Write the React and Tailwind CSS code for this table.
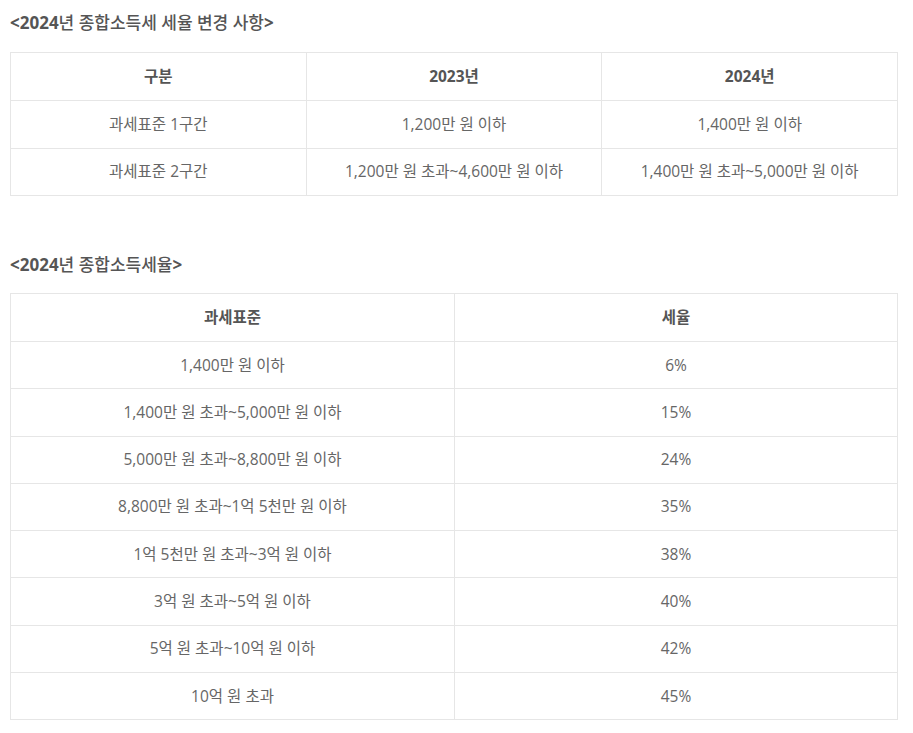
import React from 'react';

const changes = [
  ['과세표준 1구간', '1,200만 원 이하', '1,400만 원 이하'],
  ['과세표준 2구간', '1,200만 원 초과~4,600만 원 이하', '1,400만 원 초과~5,000만 원 이하'],
];

const rates = [
  ['1,400만 원 이하', '6%'],
  ['1,400만 원 초과~5,000만 원 이하', '15%'],
  ['5,000만 원 초과~8,800만 원 이하', '24%'],
  ['8,800만 원 초과~1억 5천만 원 이하', '35%'],
  ['1억 5천만 원 초과~3억 원 이하', '38%'],
  ['3억 원 초과~5억 원 이하', '40%'],
  ['5억 원 초과~10억 원 이하', '42%'],
  ['10억 원 초과', '45%'],
];

const font = { fontFamily: '"Open Sans", "Noto Sans CJK KR", sans-serif' };

function Title({ children, className = '' }) {
  return (
    <h3 className={`text-[17px] text-[#555] leading-[24px] ${className}`}>
      <b>&lt;2024</b>
      <span className="font-medium">{children}</span>
      <b>&gt;</b>
    </h3>
  );
}

function App() {
  return (
    <div className="bg-white min-h-[733px] px-[10px] pt-[11px] text-[#666] text-[15.5px]" style={font}>
      <Title>년 종합소득세 세율 변경 사항</Title>
      <table className="w-[888px] mt-[17px] border-collapse table-fixed">
        <thead>
          <tr className="h-[48px]">
            <th className="border border-[#e6e6e6] font-bold text-[#555]">구분</th>
            <th className="border border-[#e6e6e6] font-bold text-[#555]">2023년</th>
            <th className="border border-[#e6e6e6] font-bold text-[#555]">2024년</th>
          </tr>
        </thead>
        <tbody>
          {changes.map((row, i) => (
            <tr key={i} className="h-[47.5px]">
              {row.map((cell, j) => (
                <td key={j} className="border border-[#e6e6e6] text-center">{cell}</td>
              ))}
            </tr>
          ))}
        </tbody>
      </table>

      <Title className="mt-[57px]">년 종합소득세율</Title>
      <table className="w-[888px] mt-[16px] border-collapse table-fixed">
        <thead>
          <tr className="h-[48px]">
            <th className="border border-[#e6e6e6] font-bold text-[#555] w-[444px]">과세표준</th>
            <th className="border border-[#e6e6e6] font-bold text-[#555]">세율</th>
          </tr>
        </thead>
        <tbody>
          {rates.map((row, i) => (
            <tr key={i} className="h-[47.3px]">
              <td className="border border-[#e6e6e6] text-center">{row[0]}</td>
              <td className="border border-[#e6e6e6] text-center">{row[1]}</td>
            </tr>
          ))}
        </tbody>
      </table>
    </div>
  );
}

export default App;
